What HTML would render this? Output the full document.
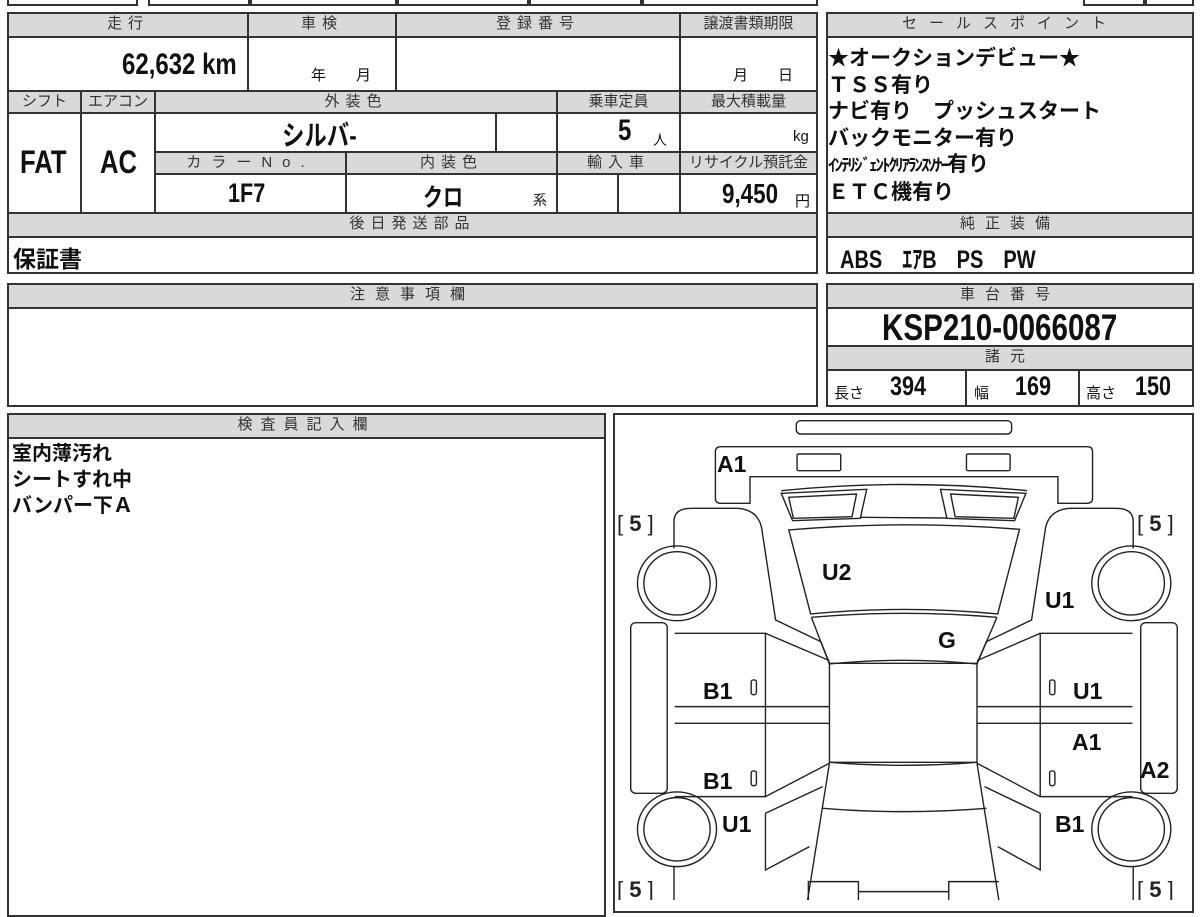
<!DOCTYPE html>
<html><head><meta charset="utf-8"><style>
*{margin:0;padding:0;box-sizing:border-box}
body{width:1200px;height:900px;background:#fff;position:relative;overflow:hidden;font-family:"Liberation Sans","Noto Sans CJK JP",sans-serif;color:#111}
.c{position:absolute;border:2px solid #333}
.h{background:#d9d9d9;color:#333;font-size:15px;text-align:center;letter-spacing:6px;line-height:20px}
.t{position:absolute;white-space:nowrap}
.bn{font-weight:bold;transform:scaleX(.8);transform-origin:left center;font-family:"Liberation Sans","Noto Sans CJK JP",sans-serif}
.sp{font-weight:bold;font-size:21px;line-height:26.5px}
</style></head><body>
<div class="c" style="left:7px;top:-12px;width:131px;height:18px"></div>
<div class="c" style="left:148px;top:-12px;width:670px;height:18px"></div>
<div class="c" style="left:248px;top:-12px;width:1px;height:18px"></div>
<div class="c" style="left:395px;top:-12px;width:1px;height:18px"></div>
<div class="c" style="left:527px;top:-12px;width:1px;height:18px"></div>
<div class="c" style="left:640px;top:-12px;width:1px;height:18px"></div>
<div class="c" style="left:1083px;top:-12px;width:111px;height:18px"></div>
<div class="c" style="left:1143px;top:-12px;width:1px;height:18px"></div>

<div class="c h" style="left:7px;top:12px;width:242px;height:26px">走行</div>
<div class="c h" style="left:247px;top:12px;width:150px;height:26px">車検</div>
<div class="c h" style="left:395px;top:12px;width:286px;height:26px">登録番号</div>
<div class="c h" style="left:679px;top:12px;width:139px;height:26px;letter-spacing:0">譲渡書類期限</div>
<div class="c" style="left:7px;top:36px;width:242px;height:56px"></div>
<div class="c" style="left:247px;top:36px;width:150px;height:56px"></div>
<div class="c" style="left:395px;top:36px;width:286px;height:56px"></div>
<div class="c" style="left:679px;top:36px;width:139px;height:56px"></div>
<div class="t bn" style="left:122px;top:48px;font-size:30px">62,632 km</div>
<div class="t" style="left:311px;top:64px;font-size:15px">年　　月</div>
<div class="t" style="left:733px;top:64px;font-size:15px">月　　日</div>

<div class="c h" style="left:7px;top:90px;width:75px;height:24px;letter-spacing:0">シフト</div>
<div class="c h" style="left:80px;top:90px;width:76px;height:24px;letter-spacing:0">エアコン</div>
<div class="c h" style="left:154px;top:90px;width:404px;height:24px">外装色</div>
<div class="c h" style="left:556px;top:90px;width:125px;height:24px;letter-spacing:0">乗車定員</div>
<div class="c h" style="left:679px;top:90px;width:139px;height:24px;letter-spacing:0">最大積載量</div>
<div class="c" style="left:7px;top:112px;width:75px;height:102px"></div>
<div class="c" style="left:80px;top:112px;width:76px;height:102px"></div>
<div class="c" style="left:154px;top:112px;width:343px;height:41px"></div>
<div class="c" style="left:495px;top:112px;width:63px;height:41px"></div>
<div class="c" style="left:556px;top:112px;width:125px;height:41px"></div>
<div class="c" style="left:679px;top:112px;width:139px;height:41px"></div>
<div class="c h" style="left:154px;top:151px;width:193px;height:24px;letter-spacing:10px">カラーNo.</div>
<div class="c h" style="left:345px;top:151px;width:213px;height:24px">内装色</div>
<div class="c h" style="left:556px;top:151px;width:125px;height:24px">輸入車</div>
<div class="c h" style="left:679px;top:151px;width:139px;height:24px;letter-spacing:0">リサイクル預託金</div>
<div class="c" style="left:154px;top:173px;width:193px;height:41px"></div>
<div class="c" style="left:345px;top:173px;width:213px;height:41px"></div>
<div class="c" style="left:556px;top:173px;width:63px;height:41px"></div>
<div class="c" style="left:617px;top:173px;width:64px;height:41px"></div>
<div class="c" style="left:679px;top:173px;width:139px;height:41px"></div>
<div class="t bn" style="left:20px;top:144px;font-size:32px">FAT</div>
<div class="t bn" style="left:100px;top:144px;font-size:32px">AC</div>
<div class="t bn" style="left:282px;top:114px;font-size:28px">シルバ-</div>
<div class="t bn" style="left:618px;top:114px;font-size:30px">5</div>
<div class="t" style="left:653px;top:130px;font-size:14px">人</div>
<div class="t" style="left:793px;top:128px;font-size:15px">kg</div>
<div class="t bn" style="left:228px;top:178px;font-size:27px">1F7</div>
<div class="t bn" style="left:423px;top:178px;font-size:25px">クロ</div>
<div class="t" style="left:533px;top:190px;font-size:14px">系</div>
<div class="t bn" style="left:722px;top:178px;font-size:28px">9,450</div>
<div class="t" style="left:795px;top:190px;font-size:15px">円</div>
<div class="c h" style="left:7px;top:212px;width:811px;height:26px">後日発送部品</div>
<div class="c" style="left:7px;top:236px;width:811px;height:38px"></div>
<div class="t" style="left:13px;top:240px;font-size:23px;font-weight:bold">保証書</div>

<div class="c h" style="left:826px;top:12px;width:368px;height:26px;letter-spacing:12px">セールスポイント</div>
<div class="c" style="left:826px;top:36px;width:368px;height:178px"></div>
<div class="t sp" style="left:828px;top:46px">★オークションデビュー★<br>ＴＳＳ有り<br>ナビ有り　プッシュスタート<br>バックモニター有り<br><span style="font-size:17px;letter-spacing:-2px">ｲﾝﾃﾘｼﾞｪﾝﾄｸﾘｱﾗﾝｽｿﾅｰ</span>有り<br>ＥＴＣ機有り</div>
<div class="c h" style="left:826px;top:212px;width:368px;height:26px;letter-spacing:10px">純正装備</div>
<div class="c" style="left:826px;top:236px;width:368px;height:38px"></div>
<div class="t bn" style="left:840px;top:240px;font-size:25px">ABS　ｴｱB　PS　PW</div>

<div class="c h" style="left:7px;top:283px;width:811px;height:26px;letter-spacing:10px">注意事項欄</div>
<div class="c" style="left:7px;top:307px;width:811px;height:100px"></div>
<div class="c h" style="left:826px;top:283px;width:368px;height:26px;letter-spacing:10px">車台番号</div>
<div class="c" style="left:826px;top:307px;width:368px;height:40px"></div>
<div class="t bn" style="left:882px;top:307px;font-size:37px">KSP210-0066087</div>
<div class="c h" style="left:826px;top:345px;width:368px;height:26px;letter-spacing:10px">諸元</div>
<div class="c" style="left:826px;top:369px;width:141px;height:38px"></div>
<div class="c" style="left:965px;top:369px;width:115px;height:38px"></div>
<div class="c" style="left:1078px;top:369px;width:116px;height:38px"></div>
<div class="t" style="left:834px;top:382px;font-size:15px">長さ</div>
<div class="t bn" style="left:890px;top:371px;font-size:27px">394</div>
<div class="t" style="left:974px;top:382px;font-size:15px">幅</div>
<div class="t bn" style="left:1015px;top:371px;font-size:27px">169</div>
<div class="t" style="left:1086px;top:382px;font-size:15px">高さ</div>
<div class="t bn" style="left:1135px;top:371px;font-size:27px">150</div>

<div class="c h" style="left:7px;top:413px;width:599px;height:26px;letter-spacing:8px">検査員記入欄</div>
<div class="c" style="left:7px;top:437px;width:599px;height:480px"></div>
<div class="t" style="left:12px;top:441px;font-size:20px;font-weight:bold;line-height:26px">室内薄汚れ<br>シートすれ中<br>バンパー下Ａ</div>

<div class="c" style="left:613px;top:413px;width:581px;height:500px"></div>
<svg style="position:absolute;left:0;top:0" width="1200" height="900">
<g transform="translate(610,410) scale(0.3764,0.3333)" fill="none" stroke="#222" stroke-width="1.4" vector-effect="non-scaling-stroke">
<g vector-effect="non-scaling-stroke">
<rect x="495" y="32" width="572" height="40" rx="12" vector-effect="non-scaling-stroke"/>
<path vector-effect="non-scaling-stroke" d="M295,110 H1268 Q1282,110 1282,125 V265 Q1282,280 1265,280 H1190 V200 H372 V280 H295 Q280,280 280,265 V125 Q280,110 295,110 Z"/>
<rect vector-effect="non-scaling-stroke" x="497" y="132" width="116" height="50" rx="4"/>
<rect vector-effect="non-scaling-stroke" x="947" y="132" width="116" height="50" rx="4"/>
<path vector-effect="non-scaling-stroke" d="M455,242 Q780,205 1108,242"/>
<path vector-effect="non-scaling-stroke" d="M455,250 L682,238 L665,325 L485,332 Z"/>
<path vector-effect="non-scaling-stroke" d="M475,262 L655,252 L643,320 L487,325 Z"/>
<path vector-effect="non-scaling-stroke" d="M1105,250 L878,238 L895,325 L1075,332 Z"/>
<path vector-effect="non-scaling-stroke" d="M1085,262 L905,252 L917,320 L1073,325 Z"/>
<path vector-effect="non-scaling-stroke" d="M665,322 L895,324"/>
<path vector-effect="non-scaling-stroke" d="M475,360 Q780,330 1088,358 L1030,612 Q780,585 533,612 Z"/>
<path vector-effect="non-scaling-stroke" d="M535,622 Q780,598 1028,622"/>
<path vector-effect="non-scaling-stroke" d="M583,762 Q780,740 975,762"/>
<path vector-effect="non-scaling-stroke" d="M535,622 L583,762 M1028,622 L975,762"/>
<path vector-effect="non-scaling-stroke" d="M170,415 V335 Q170,295 215,295 H340 Q400,300 405,370 L440,630 L560,695 L583,760"/>
<path vector-effect="non-scaling-stroke" d="M1390,415 V335 Q1390,295 1345,295 H1220 Q1160,300 1155,370 L1120,630 L1000,695 L975,760"/>
<ellipse vector-effect="non-scaling-stroke" cx="178" cy="520" rx="105" ry="112"/><ellipse vector-effect="non-scaling-stroke" cx="178" cy="520" rx="88" ry="95"/>
<ellipse vector-effect="non-scaling-stroke" cx="1385" cy="520" rx="105" ry="112"/><ellipse vector-effect="non-scaling-stroke" cx="1385" cy="520" rx="88" ry="95"/>
<ellipse vector-effect="non-scaling-stroke" cx="178" cy="1258" rx="105" ry="112"/><ellipse vector-effect="non-scaling-stroke" cx="178" cy="1258" rx="88" ry="95"/>
<ellipse vector-effect="non-scaling-stroke" cx="1385" cy="1258" rx="105" ry="112"/><ellipse vector-effect="non-scaling-stroke" cx="1385" cy="1258" rx="88" ry="95"/>
<rect vector-effect="non-scaling-stroke" x="55" y="638" width="97" height="512" rx="14"/>
<rect vector-effect="non-scaling-stroke" x="1410" y="638" width="97" height="512" rx="14"/>
<path vector-effect="non-scaling-stroke" d="M172,670 H413 V1160 H172 M172,890 H583 M172,940 H583"/>
<path vector-effect="non-scaling-stroke" d="M1388,670 H1143 V1160 H1388 M1388,890 H975 M1388,940 H975"/>
<path vector-effect="non-scaling-stroke" d="M413,670 L583,752 M413,1160 L583,1060 M1143,670 L975,752 M1143,1160 L975,1060"/>
<rect vector-effect="non-scaling-stroke" x="583" y="760" width="392" height="297"/>
<path vector-effect="non-scaling-stroke" d="M583,1057 Q780,1075 975,1057"/>
<path vector-effect="non-scaling-stroke" d="M565,1195 Q780,1215 1000,1195"/>
<path vector-effect="non-scaling-stroke" d="M583,1060 L525,1470 M975,1060 L1033,1470"/>
<path vector-effect="non-scaling-stroke" d="M413,1210 L565,1130 M413,1210 V1380 L530,1310"/>
<path vector-effect="non-scaling-stroke" d="M1143,1210 L995,1130 M1143,1210 V1380 L1030,1310"/>
<path vector-effect="non-scaling-stroke" d="M170,1370 V1470 M1390,1370 V1470"/>
<path vector-effect="non-scaling-stroke" d="M527,1470 V1415 H660 V1470 M660,1445 H900 M900,1470 V1415 H1033"/>
<rect vector-effect="non-scaling-stroke" x="375" y="810" width="14" height="44" rx="6"/>
<rect vector-effect="non-scaling-stroke" x="375" y="1083" width="14" height="44" rx="6"/>
<rect vector-effect="non-scaling-stroke" x="1168" y="810" width="14" height="44" rx="6"/>
<rect vector-effect="non-scaling-stroke" x="1168" y="1083" width="14" height="44" rx="6"/>
</g>
</g>
<g font-family="Liberation Sans" font-weight="bold" font-size="23" fill="#111">
<text x="717" y="472">A1</text>
<text x="822" y="580">U2</text>
<text x="1045" y="608">U1</text>
<text x="938" y="648">G</text>
<text x="703" y="699">B1</text>
<text x="1073" y="699">U1</text>
<text x="1072" y="750">A1</text>
<text x="1140" y="778">A2</text>
<text x="703" y="789">B1</text>
<text x="722" y="832">U1</text>
<text x="1055" y="832">B1</text>
</g>
<g font-family="Liberation Sans" font-size="22" fill="#222">
<text x="617" y="531">[ <tspan font-weight="bold">5</tspan> ]</text>
<text x="1137" y="531">[ <tspan font-weight="bold">5</tspan> ]</text>
<text x="617" y="897">[ <tspan font-weight="bold">5</tspan> ]</text>
<text x="1137" y="897">[ <tspan font-weight="bold">5</tspan> ]</text>
</g>
</svg>
</body></html>
